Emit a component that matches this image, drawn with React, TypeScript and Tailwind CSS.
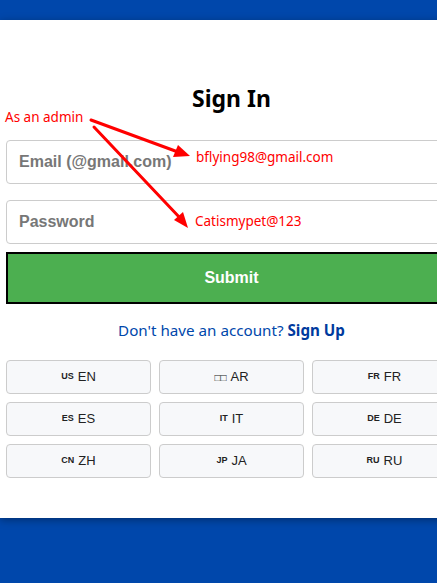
const languages = [
  { flag: 'US', code: 'EN' },
  { flag: '□□', code: 'AR' },
  { flag: 'FR', code: 'FR' },
  { flag: 'ES', code: 'ES' },
  { flag: 'IT', code: 'IT' },
  { flag: 'DE', code: 'DE' },
  { flag: 'CN', code: 'ZH' },
  { flag: 'JP', code: 'JA' },
  { flag: 'RU', code: 'RU' },
];

export default function App() {
  return (
    <div className="relative w-full min-h-[583px] overflow-hidden bg-[#0047ab] pt-[20px] font-['Liberation_Sans',Arial,sans-serif]">
      <main className="w-[463px] bg-white px-[6px] pt-[62px] pb-[40px] shadow-[0_2px_8px_rgba(0,0,0,0.35)]">
        <h1 className="text-center text-[23px] leading-[32px] font-bold text-black font-['Noto_Sans',sans-serif]">Sign In</h1>

        <form className="mt-[26px] flex flex-col">
          <input
            type="email"
            placeholder="Email (@gmail.com)"
            className="h-[44px] w-full rounded-[4px] border border-[#cccccc] px-[12px] text-[16px] font-bold text-[#333] placeholder:text-[#777] outline-none"
          />
          <input
            type="password"
            placeholder="Password"
            className="mt-[16px] h-[44px] w-full rounded-[4px] border border-[#cccccc] px-[12px] text-[16px] font-bold text-[#333] placeholder:text-[#777] outline-none"
          />
          <button
            type="button"
            className="mt-[8px] h-[52px] w-full border-2 border-black bg-[#4caf50] text-[16px] font-bold text-white"
          >
            Submit
          </button>
        </form>

        <p className="mt-[14px] text-center text-[15.2px] leading-[24px] text-[#0047ab] font-['Noto_Sans',sans-serif]">
          Don't have an account? <a className="font-bold text-[#003a9e]">Sign Up</a>
        </p>

        <div className="mt-[18px] grid grid-cols-3 gap-[8px]">
          {languages.map((lang) => (
            <button
              key={lang.code}
              type="button"
              className="flex h-[34px] items-center justify-center gap-[4px] rounded-[4px] border border-[#cccccc] bg-[#f7f8fa] text-[13px] text-[#222]"
            >
              <span className={lang.flag === '□□' ? 'text-[10px]' : 'text-[9px] font-bold'}>{lang.flag}</span>
              <span>{lang.code}</span>
            </button>
          ))}
        </div>
      </main>

      {/* annotations */}
      <span className="absolute left-[5px] top-[107px] text-[13.5px] text-[#ff0000] font-['Noto_Sans',sans-serif]">As an admin</span>
      <span className="absolute left-[196px] top-[147px] text-[13.5px] text-[#ff0000] font-['Noto_Sans',sans-serif]">bflying98@gmail.com</span>
      <span className="absolute left-[195px] top-[211px] text-[13.5px] text-[#ff0000] font-['Noto_Sans',sans-serif]">Catismypet@123</span>
      <svg className="pointer-events-none absolute left-0 top-0" width="437" height="583">
        <g stroke="#ff0000" strokeWidth="3" strokeLinecap="round">
          <line x1="91" y1="120" x2="178" y2="152" />
          <line x1="94" y1="127" x2="181" y2="219" />
        </g>
        <polygon points="190,156 173,157 178,145" fill="#ff0000" />
        <polygon points="188,228 174,220 183,212" fill="#ff0000" />
      </svg>
    </div>
  );
}
